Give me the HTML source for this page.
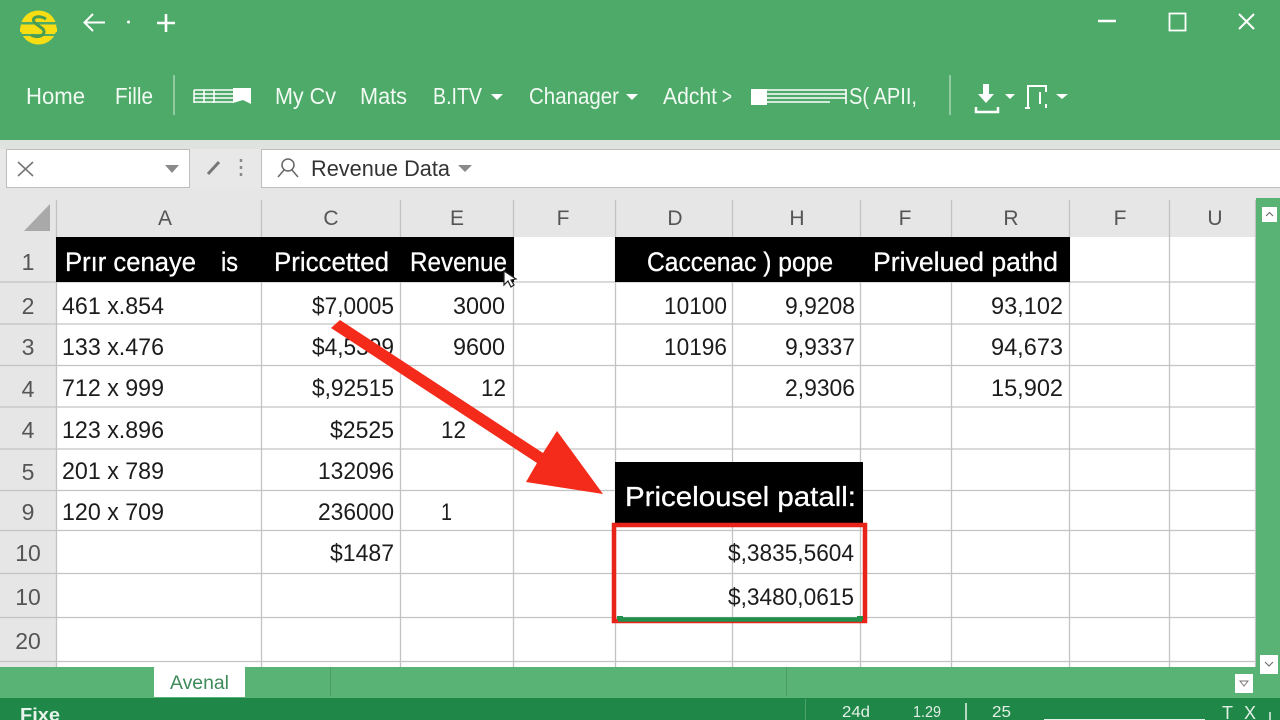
<!DOCTYPE html>
<html><head><meta charset="utf-8"><title>Revenue Data</title>
<style>
html,body{margin:0;padding:0;width:1280px;height:720px;overflow:hidden;background:#fff}
svg{display:block}
text{font-family:"Liberation Sans",sans-serif;white-space:pre}
.rb text{fill:#f2faf4;font-size:23px}
.cell text{fill:#1c1c1c;font-size:24px}
.hd text{fill:#fff;font-size:27px;stroke:#fff;stroke-width:.3px}
.col text{fill:#555;font-size:21px;text-anchor:middle}
.row text{fill:#555;font-size:23px;text-anchor:middle}
.wh{stroke:#fff;fill:none}
</style></head><body>
<svg width="1280" height="720" viewBox="0 0 1280 720" xmlns="http://www.w3.org/2000/svg">
<!-- ribbon -->
<rect width="1280" height="141" fill="#4eaa68"/>
<rect y="140" width="1280" height="9" fill="#dfe3e0"/>
<!-- logo -->
<ellipse cx="38.500" cy="27.500" rx="18" ry="17" fill="#f6dd14"/>
<rect x="21" y="22" width="36" height="2.500" fill="#4eaa68"/>
<rect x="20" y="34" width="37" height="2" fill="#4eaa68"/>
<rect x="20" y="28" width="37" height="4" fill="#f6dd14"/>
<path d="M46 19 C38 14 30 18 35 23 L43 29 C47 35 38 39 31 35" fill="none" stroke="#4a9c50" stroke-width="3"/>
<!-- title icons -->
<path class="wh" stroke-width="2" d="M85 22.500H105M93 14L84.500 22.500L93 31"/>
<circle cx="128.500" cy="22" r="1.500" fill="#fff"/>
<path class="wh" stroke-width="2.600" d="M157 23H175M166 14V32"/>
<path class="wh" stroke-width="2.500" d="M1098 21H1116"/>
<rect class="wh" stroke-width="1.800" x="1169.500" y="13.500" width="16" height="17"/>
<path class="wh" stroke-width="2" d="M1239 14L1254 29M1254 14L1239 29"/>
<!-- ribbon text -->
<g class="rb">
<text x="26" y="104" textLength="59" lengthAdjust="spacingAndGlyphs">Home</text>
<text x="115" y="104" textLength="38" lengthAdjust="spacingAndGlyphs">Fille</text>
<text x="275" y="104" textLength="61" lengthAdjust="spacingAndGlyphs">My Cv</text>
<text x="360" y="104" textLength="47" lengthAdjust="spacingAndGlyphs">Mats</text>
<text x="433" y="104" textLength="49" lengthAdjust="spacingAndGlyphs">B.ITV</text>
<text x="529" y="104" textLength="90" lengthAdjust="spacingAndGlyphs">Chanager</text>
<text x="663" y="104" textLength="54" lengthAdjust="spacingAndGlyphs">Adcht</text>
<text x="722" y="104" textLength="10" lengthAdjust="spacingAndGlyphs">&gt;</text>
<text x="849" y="104" textLength="68" lengthAdjust="spacingAndGlyphs">S( APII,</text>
</g>
<path stroke="#a9d6b6" stroke-width="1.500" d="M174 75V115M950 75V115"/>
<path fill="#fff" d="M491 94h12l-6 6zM626 94h12l-6 6zM1005 94h10l-5 5zM1056 94h12l-6 5z"/>
<!-- striped icons -->
<g stroke="#fff" stroke-width="1.500" fill="none">
<path d="M194 90H234M194 94H234M194 98H234M194 102H234M194 90V103M204 90V103M214 90V103"/>
</g>
<path fill="#fff" d="M233 88H251V104L243 100L233 103Z"/>
<rect x="751" y="89" width="16" height="16" fill="#fff"/>
<g stroke="#fff" stroke-width="1.600" fill="none"><path d="M766 90H846M764 94H846M766 98H846M764 102H830M846 89V104"/></g>
<!-- download + other icons -->
<path fill="#fff" d="M983 84h6v10h5l-8 9-8-9h5z"/>
<path class="wh" stroke-width="2.500" d="M976 107V112H998V107"/>
<path class="wh" stroke-width="2" d="M1028 108V86H1046V92M1040 92V104M1046 104V108M1025 108H1030"/>
<!-- formula bar -->
<rect y="149" width="1280" height="50" fill="#e8e8e8"/>
<rect x="6.500" y="149.500" width="183" height="38" fill="#fff" stroke="#bdbdbd"/>
<path stroke="#777" stroke-width="1.600" fill="none" d="M18 162L33 176M33 162L18 176"/>
<path fill="#8a8a8a" d="M165 165h14l-7 8z"/>
<path stroke="#777" stroke-width="3" fill="none" d="M208 174L219 162"/>
<path stroke="#8a8a8a" stroke-width="2.500" fill="none" stroke-dasharray="3 4" d="M241 159V177"/>
<rect x="261.500" y="149.500" width="1030" height="38" fill="#fff" stroke="#bdbdbd"/>
<circle cx="288" cy="165" r="6" fill="none" stroke="#666" stroke-width="1.500"/>
<path fill="none" stroke="#666" stroke-width="1.500" d="M278 177L284 170M298 177L292 170"/>
<text x="311" y="176" font-size="22" fill="#333" textLength="139" lengthAdjust="spacingAndGlyphs">Revenue Data</text>
<path fill="#8a8a8a" d="M458 165h14l-7 7z"/>
<!-- column header -->
<rect y="188" width="1280" height="49" fill="#e6e6e6"/>
<rect y="198" width="56" height="470" fill="#e6e6e6"/>
<path fill="#a9a9a9" d="M24 231L50 204V231Z"/>
<g class="col">
<text x="165" y="225">A</text><text x="331" y="225">C</text><text x="457" y="225">E</text><text x="563" y="225">F</text>
<text x="675" y="225">D</text><text x="797" y="225">H</text><text x="905" y="225">F</text><text x="1011" y="225">R</text>
<text x="1120" y="225">F</text><text x="1215" y="225">U</text>
</g>
<!-- grid -->
<rect x="56" y="237" width="1200" height="430" fill="#fff"/>
<g stroke="#c3c3c3" stroke-width="1.300">
<path d="M56.500 200V667M261.500 200V667M400.500 200V667M513.500 200V667M615.500 200V667M732.500 200V667M860.500 200V667M951.500 200V667M1069.500 200V667M1169.500 200V667M1255.500 200V667"/>
<path d="M0 282H1256M0 324H1256M0 365.500H1256M0 407H1256M0 449H1256M0 490.500H1256M0 530.500H1256M0 573.500H1256M0 617.500H1256M0 661.500H1256"/>
</g>
<g class="row">
<text x="28" y="270">1</text><text x="28" y="314">2</text><text x="28" y="355">3</text><text x="28" y="397">4</text><text x="28" y="438">4</text><text x="28" y="480">5</text><text x="28" y="520">9</text><text x="28" y="561">10</text><text x="28" y="605">10</text><text x="28" y="649">20</text>
</g>
<!-- black headers -->
<rect x="56" y="237" width="458" height="45" fill="#000"/>
<rect x="615" y="237" width="455" height="45" fill="#000"/>
<rect x="615" y="462" width="248" height="61" fill="#000"/>
<g class="hd">
<text x="65" y="271" textLength="131" lengthAdjust="spacingAndGlyphs">Prır cenaye</text>
<text x="221" y="271" textLength="17" lengthAdjust="spacingAndGlyphs">is</text>
<text x="274" y="271" textLength="115" lengthAdjust="spacingAndGlyphs">Priccetted</text>
<text x="410" y="271" textLength="97" lengthAdjust="spacingAndGlyphs">Revenue</text>
<text x="647" y="271" textLength="186" lengthAdjust="spacingAndGlyphs">Caccenac ) pope</text>
<text x="873" y="271" textLength="185" lengthAdjust="spacingAndGlyphs">Privelued pathd</text>
<text x="625" y="506" font-size="28" style="font-size:28px" textLength="231" lengthAdjust="spacingAndGlyphs">Pricelousel patall:</text>
</g>
<!-- cursor -->
<path fill="#fff" stroke="#222" stroke-width="1.200" d="M504 271L504 285L508 281L511 287L514 285L511 280L516 279Z"/>
<!-- cells -->
<g class="cell">
<text x="62" y="314" textLength="102" lengthAdjust="spacingAndGlyphs">461 x.854</text>
<text x="62" y="355" textLength="102" lengthAdjust="spacingAndGlyphs">133 x.476</text>
<text x="62" y="396" textLength="102" lengthAdjust="spacingAndGlyphs">712 x 999</text>
<text x="62" y="438" textLength="102" lengthAdjust="spacingAndGlyphs">123 x.896</text>
<text x="62" y="479" textLength="102" lengthAdjust="spacingAndGlyphs">201 x 789</text>
<text x="62" y="520" textLength="102" lengthAdjust="spacingAndGlyphs">120 x 709</text>
<text x="312" y="314" textLength="82" lengthAdjust="spacingAndGlyphs">$7,0005</text>
<text x="312" y="355" textLength="82" lengthAdjust="spacingAndGlyphs">$4,5399</text>
<text x="312" y="396" textLength="82" lengthAdjust="spacingAndGlyphs">$,92515</text>
<text x="330" y="438" textLength="64" lengthAdjust="spacingAndGlyphs">$2525</text>
<text x="318" y="479" textLength="76" lengthAdjust="spacingAndGlyphs">132096</text>
<text x="318" y="520" textLength="76" lengthAdjust="spacingAndGlyphs">236000</text>
<text x="330" y="561" textLength="64" lengthAdjust="spacingAndGlyphs">$1487</text>
<text x="453" y="314" textLength="52" lengthAdjust="spacingAndGlyphs">3000</text>
<text x="453" y="355" textLength="52" lengthAdjust="spacingAndGlyphs">9600</text>
<text x="481" y="396" textLength="25" lengthAdjust="spacingAndGlyphs">12</text>
<text x="441" y="438" textLength="25" lengthAdjust="spacingAndGlyphs">12</text>
<text x="441" y="520" textLength="11" lengthAdjust="spacingAndGlyphs">1</text>
<text x="664" y="314" textLength="63" lengthAdjust="spacingAndGlyphs">10100</text>
<text x="664" y="355" textLength="63" lengthAdjust="spacingAndGlyphs">10196</text>
<text x="785" y="314" textLength="70" lengthAdjust="spacingAndGlyphs">9,9208</text>
<text x="785" y="355" textLength="70" lengthAdjust="spacingAndGlyphs">9,9337</text>
<text x="785" y="396" textLength="70" lengthAdjust="spacingAndGlyphs">2,9306</text>
<text x="991" y="314" textLength="72" lengthAdjust="spacingAndGlyphs">93,102</text>
<text x="991" y="355" textLength="72" lengthAdjust="spacingAndGlyphs">94,673</text>
<text x="991" y="396" textLength="72" lengthAdjust="spacingAndGlyphs">15,902</text>
<text x="728" y="561" textLength="126" lengthAdjust="spacingAndGlyphs">$,3835,5604</text>
<text x="728" y="605" textLength="126" lengthAdjust="spacingAndGlyphs">$,3480,0615</text>
</g>
<!-- red box -->
<rect x="614" y="525" width="251" height="96" fill="none" stroke="#e8231a" stroke-width="4.500"/>
<path stroke="#20904a" stroke-width="4.500" d="M618 619.500H862"/>
<rect x="617" y="616" width="6" height="4" fill="#20904a"/><rect x="857" y="616" width="6" height="4" fill="#20904a"/>
<!-- arrow -->
<path fill="#f42a1a" d="M340 320L331 328L537 463L526 482L603 494L557 431L543 453Z"/>
<!-- scrollbar -->
<rect x="1256" y="198" width="24" height="470" fill="#58b375"/>
<rect x="1262" y="207" width="15" height="15" fill="#fff"/>
<path fill="none" stroke="#666" d="M1266 216L1269.500 212.500L1273 216"/>
<!-- tabs bar -->
<rect y="667" width="1280" height="32" fill="#58b375"/>
<rect x="1260" y="655" width="18" height="19" fill="#fff"/>
<path fill="none" stroke="#666" d="M1265 662L1269 666L1273 662"/>
<rect x="154" y="667" width="91" height="30" fill="#fff"/>
<text x="170" y="689" font-size="19" fill="#3f8a5a" textLength="59" lengthAdjust="spacingAndGlyphs">Avenal</text>
<path stroke="#4a9c64" d="M330.500 667V696M786.500 667V696"/>
<rect x="1235" y="674" width="18" height="19" fill="#fff"/>
<path fill="none" stroke="#777" d="M1240 681H1248L1244 686Z"/>
<!-- status -->
<rect y="698" width="1280" height="22" fill="#1f8748"/>
<text x="20" y="721" font-size="18" font-weight="bold" fill="#e8f3ec" textLength="40" lengthAdjust="spacingAndGlyphs">Fixe</text>
<path stroke="#4da26d" stroke-width="1" d="M805.500 699V720"/>
<path stroke="#e8f3ec" stroke-width="1.500" d="M966 703V720M1270 712V720"/>
<g font-size="16" fill="#e3f0e7">
<text x="842" y="717" textLength="28" lengthAdjust="spacingAndGlyphs">24d</text>
<text x="913" y="717" textLength="28" lengthAdjust="spacingAndGlyphs">1.29</text>
<text x="992" y="717" textLength="19" lengthAdjust="spacingAndGlyphs">25</text>
</g>
<rect x="1044" y="719" width="161" height="1" fill="#e3f0e7"/>
<g font-size="18" fill="#e3f0e7"><text x="1222" y="719">T</text><text x="1244" y="719">X</text></g>
</svg>
</body></html>
